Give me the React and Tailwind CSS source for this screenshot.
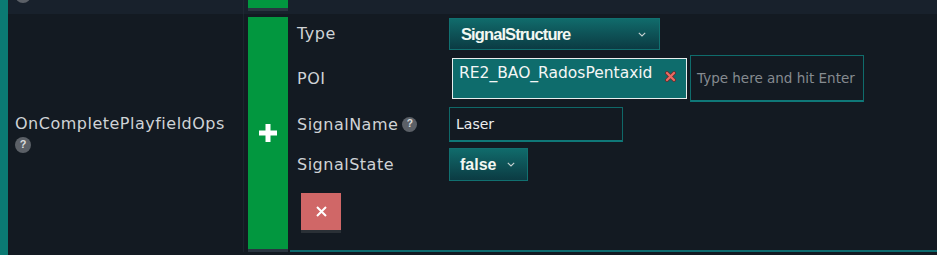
const LABEL = "font-['DejaVu_Sans',sans-serif] text-[16px] tracking-[0.5px] text-[#cfd3d6] leading-none";

function Help({ size = 16 }) {
  return (
    <div
      className="rounded-full bg-[#5b6067] flex items-center justify-center font-['Liberation_Sans',sans-serif] font-bold text-[#dcdcdc] leading-none"
      style={{ width: size, height: size, fontSize: size * 0.68 }}
    >
      ?
    </div>
  );
}

function Chevron() {
  return (
    <svg width="8" height="5" viewBox="0 0 8 5" className="shrink-0">
      <polyline points="0.8,0.8 4,4 7.2,0.8" fill="none" stroke="#c9d3d3" strokeWidth="1.1" />
    </svg>
  );
}

export default function App() {
  return (
    <div className="w-[937px] h-[255px] bg-[#131a22] flex overflow-hidden">
      <div className="w-[8px] shrink-0 bg-[#0b7a73]" />
      <div className="flex-1 flex flex-col">
        {/* previous row (cut off) */}
        <div className="h-[14px] flex bg-[#18212c] shrink-0">
          <div className="w-[236px] border-r border-[#1f2833] pl-[7px] overflow-hidden">
            <div className="w-[16px] h-[16px] rounded-full bg-[#5b6067] -mt-[13px]" />
          </div>
          <div className="ml-[4px] w-[40px] h-[8px] box-content bg-[#02973f] border-b-[3px] border-[#2a3540]" />
        </div>

        {/* main row */}
        <div className="h-[238px] flex shrink-0">
          <div className="w-[236px] border-r border-[#1b242e] flex flex-col justify-center pl-[7px] pt-[2px]">
            <div className={LABEL}>OnCompletePlayfieldOps</div>
            <div className="mt-[5px]">
              <Help size={16} />
            </div>
          </div>

          <div className="ml-[4px] w-[40px] mt-[3px] bg-[#02973f] border-b-[3px] border-[#2a3540] flex items-center justify-center">
            <svg width="18" height="18" viewBox="0 0 18 18">
              <rect x="0" y="6.5" width="18" height="5" fill="#ffffff" />
              <rect x="6.5" y="0" width="5" height="18" fill="#ffffff" />
            </svg>
          </div>

          <div className="flex-1 ml-[2px] border-b-2 border-[#0d6a6e] pl-[7px] pt-[4px] flex flex-col">
            {/* Type */}
            <div className="h-[32px] flex items-center">
              <div className={`w-[152px] ${LABEL}`}>Type</div>
              <div className="w-[211px] h-[32px] border border-[#117070] bg-gradient-to-b from-[#106b6b] to-[#0b3b43] flex items-center justify-between pl-[11px] pr-[13px]">
                <span className="font-['Liberation_Sans',sans-serif] font-bold text-[16.5px] tracking-[-0.9px] text-[#f2f8f2]">
                  SignalStructure
                </span>
                <Chevron />
              </div>
            </div>

            {/* POI */}
            <div className="h-[47px] flex items-center mt-[5px]">
              <div className={`w-[152px] ${LABEL}`}>POI</div>
              <div className="ml-[3px] w-[235px] h-[41px] border border-[#e8eeee] bg-[#0e6c6c] flex items-start pl-[6px] pt-[5px]">
                <span className="font-['DejaVu_Sans',sans-serif] text-[15.5px] leading-[18px] text-[#f4f6f6]">
                  RE2_BAO_RadosPentaxid
                </span>
                <svg width="11" height="11" viewBox="0 0 11 11" className="ml-[13px] mt-[7px] shrink-0">
                  <path d="M2 2 L9 9 M9 2 L2 9" stroke="#6e2c2c" strokeWidth="3.8" strokeLinecap="round" />
                  <path d="M2 2 L9 9 M9 2 L2 9" stroke="#ea6c64" strokeWidth="2.2" strokeLinecap="round" />
                </svg>
              </div>
              <div className="ml-[3px] w-[174px] h-[47px] border border-[#0f6c6c] border-b-2 border-b-[#0f7878] flex items-center pl-[6px]">
                <span className="font-['DejaVu_Sans',sans-serif] text-[13.5px] text-[#868b90] whitespace-nowrap">
                  Type here and hit Enter
                </span>
              </div>
            </div>

            {/* SignalName */}
            <div className="h-[35px] flex items-center mt-[5px]">
              <div className="w-[152px] flex items-center gap-[4px]">
                <span className={LABEL}>SignalName</span>
                <Help size={15} />
              </div>
              <div className="w-[174px] h-[35px] border border-[#0f6868] border-b-2 border-b-[#0f7878] flex items-center pl-[6px]">
                <span className="font-['DejaVu_Sans',sans-serif] text-[14px] text-[#eceeee]">Laser</span>
              </div>
            </div>

            {/* SignalState */}
            <div className="h-[33px] flex items-center mt-[6px]">
              <div className={`w-[152px] ${LABEL}`}>SignalState</div>
              <div className="w-[79px] h-[33px] border border-[#117070] bg-gradient-to-b from-[#106b6b] to-[#0b3b43] flex items-center pl-[10px] gap-[11px]">
                <span className="font-['Liberation_Sans',sans-serif] font-bold text-[16px] text-[#f2f8f2]">false</span>
                <Chevron />
              </div>
            </div>

            {/* Remove */}
            <div className="mt-[12px] ml-[4px] w-[40px] h-[40px] bg-[#d06767] border-b-[3px] border-[#2a3036] flex items-center justify-center">
              <svg width="11" height="11" viewBox="0 0 11 11">
                <path d="M1 1 L10 10 M10 1 L1 10" stroke="#ffffff" strokeWidth="2" />
              </svg>
            </div>
          </div>
        </div>
      </div>
    </div>
  );
}
